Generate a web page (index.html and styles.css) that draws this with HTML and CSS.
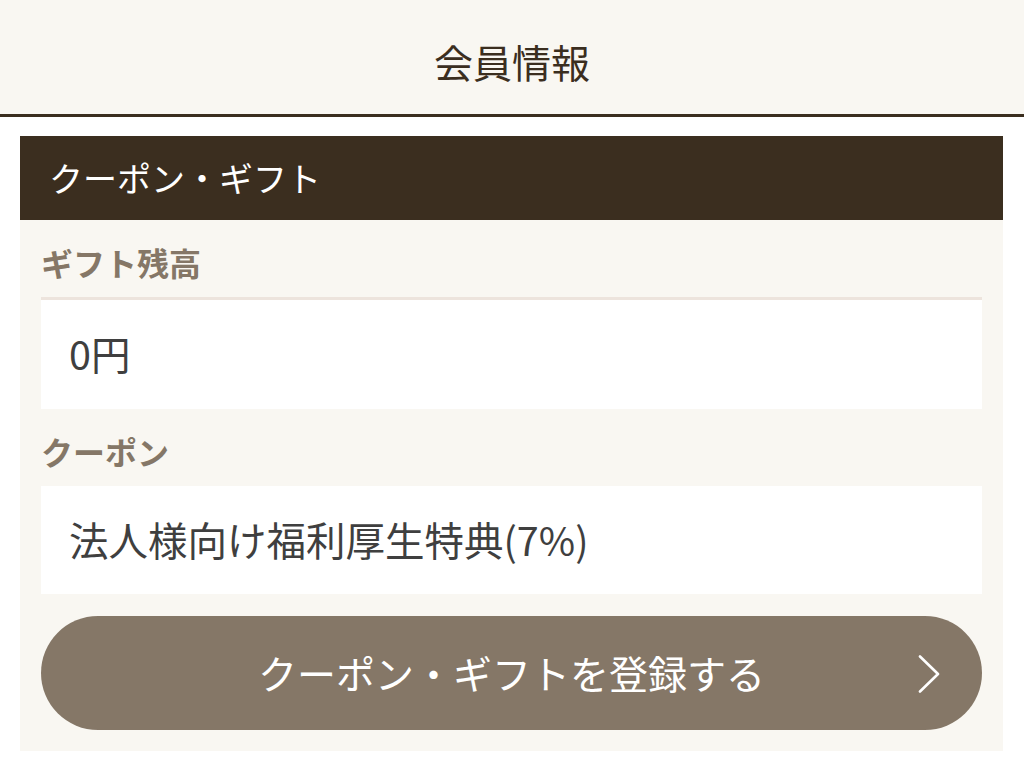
FILE: index.html
```html
<!DOCTYPE html>
<html lang="ja">
<head>
<meta charset="utf-8">
<title>会員情報</title>
<link rel="stylesheet" href="styles.css">
</head>
<body>
<header class="page-header">
  <h1 class="page-title">会員情報</h1>
</header>
<main class="content">
  <section class="card">
    <h2 class="card-title">クーポン・ギフト</h2>
    <div class="card-body">
      <div class="field-label">ギフト残高</div>
      <div class="field-value field-value--lined">0円</div>
      <div class="field-label">クーポン</div>
      <div class="field-value">法人様向け福利厚生特典(7%)</div>
      <button class="action-btn" type="button">
        <span class="action-text">クーポン・ギフトを登録する</span>
        <svg class="chevron" width="24" height="38" viewBox="0 0 24 38" aria-hidden="true">
          <path d="M3 1.5 L21 19 L3 36.5" fill="none" stroke="#ffffff" stroke-width="2.6" stroke-linecap="round" stroke-linejoin="round"/>
        </svg>
      </button>
    </div>
  </section>
</main>
</body>
</html>
```
FILE: styles.css
```css
* { box-sizing: border-box; }
html, body {
  margin: 0;
  padding: 0;
  background: #ffffff;
  font-family: "Noto Sans CJK JP", "Noto Sans", sans-serif;
}
.page-header {
  height: 117px;
  background: #f9f7f2;
  border-bottom: 3px solid #3b2e1f;
  display: flex;
  align-items: center;
  justify-content: center;
}
.page-title {
  margin: 0;
  font-size: 39px;
  font-weight: 400;
  color: #3b2e1f;
  line-height: 1;
  padding-top: 8px;
}
.content {
  padding: 19px 21px 0 20px;
}
.card {
  background: #f9f7f2;
}
.card-title {
  margin: 0;
  height: 84px;
  background: #3b2e1f;
  color: #ffffff;
  font-size: 34px;
  font-weight: 400;
  display: flex;
  align-items: center;
  padding-left: 29px;
  padding-bottom: 2px;
}
.card-body {
  padding: 0 21px 21px 21px;
  display: flex;
  flex-direction: column;
}
.field-label {
  padding-top: 22px;
  margin-bottom: 15px;
  line-height: 40px;
  font-size: 32px;
  font-weight: 700;
  color: #857767;
}
.field-value {
  height: 108px;
  background: #ffffff;
  display: flex;
  align-items: center;
  padding-left: 28px;
  font-size: 39.5px;
  color: #3f3f3f;
  padding-bottom: 4px;
}
.field-value--lined {
  height: 112px;
  border-top: 3px solid #ede4dd;
}
.action-btn {
  margin-top: 22px;
  height: 114px;
  border: none;
  border-radius: 57px;
  background: #857767;
  color: #ffffff;
  font-family: inherit;
  font-size: 39px;
  display: flex;
  align-items: center;
  justify-content: center;
  position: relative;
  padding: 0 0 2px 0;
}
.action-text {
  line-height: 1;
}
.chevron {
  position: absolute;
  right: 41px;
  top: 39px;
}
```
